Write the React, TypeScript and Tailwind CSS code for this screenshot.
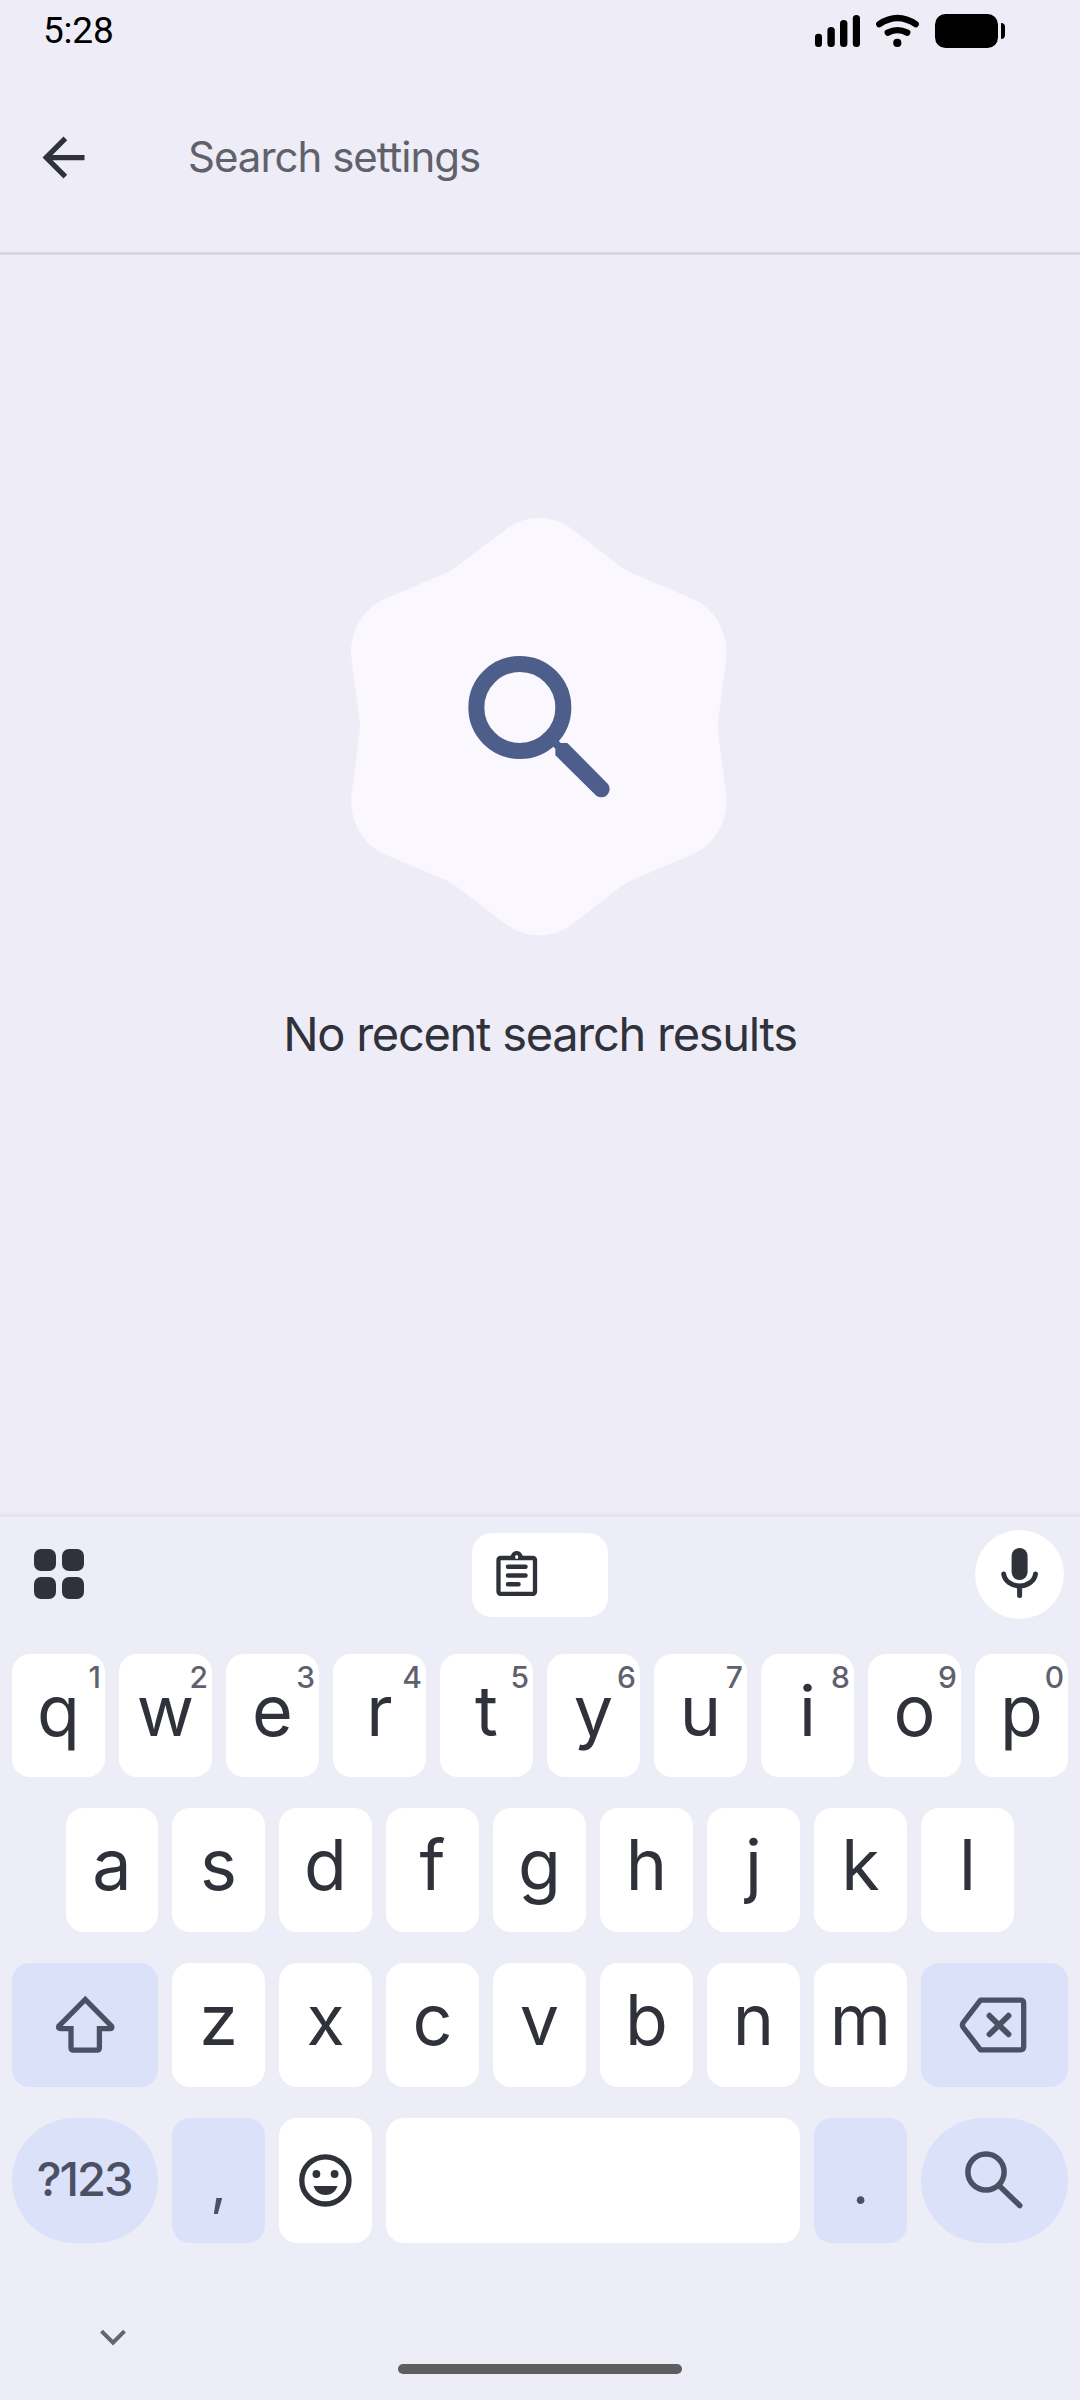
import type { ReactNode } from 'react';

const INK = '#2f323a';
const MUTED = '#4c5064';

function StatusBar() {
  return (
    <div className="flex h-[64px] justify-between pl-[43px] pr-[75px]">
      <span className="font-[Roboto] text-[37px] leading-[61px] tracking-[-0.2px] text-black">5:28</span>
      <svg className="h-[64px] w-[190px]" viewBox="815 0 190 64">
        <rect x="815" y="33.7" width="7" height="13.3" rx="3.3" />
        <rect x="827.4" y="27" width="7.4" height="20" rx="3.5" />
        <rect x="840" y="20" width="7.4" height="27" rx="3.5" />
        <rect x="852.8" y="15" width="7.2" height="32" rx="3.5" />
        <g fill="none" stroke="#000" strokeWidth="6.4" strokeLinecap="round">
          <path d="M879.3 24.2Q897.5 12 915.7 24.2" />
          <path d="M887.8 32.6Q897.5 27.6 907.2 32.6" />
        </g>
        <circle cx="897.3" cy="42.9" r="4.1" />
        <rect x="935" y="14" width="63" height="34" rx="10.5" />
        <path d="M1001 23c2.6 0 4 1.600 4 4v8c0 2.400-1.400 4-4 4z" />
      </svg>
    </div>
  );
}

function SearchHeader() {
  return (
    <header className="flex h-[191px] items-start border-b-[3px] border-[#d7d6e1] pl-[32px] pt-[62px]">
      <svg className="h-[63px] w-[63px]" viewBox="0 0 24 24" fill={INK}>
        <path d="M20 11H7.83l5.590-5.590L12 4l-8 8 8 8 1.410-1.410L7.830 13H20v-2z" />
      </svg>
      <span className="ml-[93px] text-[42px] leading-[61px] tracking-[-1px] text-[#5f626b]">
        Search settings
      </span>
    </header>
  );
}

function EmptyState() {
  return (
    <main className="flex h-[1262px] flex-col items-center pt-[245px]">
      <svg className="h-[450px] w-[420px]" viewBox="0 0 1260 1350">
        <path
          fill="#faf8fe"
          d="M530 86Q573 54 626 54Q682 54 725 86L872 200Q888 212 905 219L1090 298C1153 326 1195 396 1189 470L1164 665Q1162 680 1164 695L1189 890C1195 964 1153 1034 1090 1062L905 1141Q888 1148 872 1160L725 1274Q682 1306 626 1306Q573 1306 530 1274L382 1162Q366 1149 348 1141L162 1062C100 1034 58 964 64 890L89 695Q91 680 89 665L64 470C58 396 100 326 162 298L348 219Q366 211 382 198Z"
        />
        <circle cx="569.500" cy="622.500" r="130.500" fill="none" stroke="#4d5e8b" strokeWidth="48" />
        <path
          fill="#4d5e8b"
          d="M640 700L670 740L676 746V766L799 887A25 25 0 0 0 834 852L712 729H692L686 722L660 690Z"
        />
      </svg>
      <p className="mt-[54px] text-[47px] leading-[60px] tracking-[-1.28px] text-[#2f323a]">
        No recent search results
      </p>
    </main>
  );
}

function Toolbar() {
  return (
    <div className="flex h-[137px] items-start justify-between pl-[34px] pr-[16px] pt-[13px]">
      <div className="mt-[19px] grid grid-cols-2 gap-[6px]">
        <i className="h-[22px] w-[22px] rounded-[7px] bg-[#2f323a]" />
        <i className="h-[22px] w-[22px] rounded-[7px] bg-[#2f323a]" />
        <i className="h-[22px] w-[22px] rounded-[7px] bg-[#2f323a]" />
        <i className="h-[22px] w-[22px] rounded-[7px] bg-[#2f323a]" />
      </div>
      <div className="ml-[21px] mt-[3px] h-[84px] w-[136px] rounded-[20px] bg-white">
        <svg className="h-full w-full" viewBox="472 1533 136 84">
          <rect x="498.500" y="1558" width="36.500" height="35.800" rx="2" fill="none" stroke={INK} strokeWidth="4.300" />
          <path fill={INK} d="M509 1558.500C511 1557 511 1551 516.700 1551S522.500 1557 524.500 1558.500Z" />
          <ellipse cx="516.700" cy="1557" rx="1.600" ry="2" fill="#fff" />
          <path d="M508 1566.700H525.500M508 1575.500H525.500M508 1584.300H518.500" stroke={INK} strokeWidth="4.500" strokeLinecap="round" />
        </svg>
      </div>
      <div className="h-[89px] w-[89px] rounded-full bg-white">
        <svg className="h-full w-full" viewBox="975 1530 89 89">
          <rect x="1011.600" y="1548" width="16" height="32" rx="8" fill={INK} />
          <path d="M1003.700 1574a16 13.500 0 0 0 31.800 0M1019.600 1588V1595.500" fill="none" stroke={INK} strokeWidth="5" strokeLinecap="round" />
        </svg>
      </div>
    </div>
  );
}

function LetterKey({ letter, hint }: { letter: string; hint?: string }) {
  return (
    <div className="relative w-[93px] shrink-0 rounded-[18px] bg-white text-center text-[70px] leading-[113px] text-[#2f323a] first:data-[letter=a]:w-[92px]" data-letter={letter}>
      {letter}
      {hint && (
        <span className="absolute right-[4px] top-[7px] text-[30px] font-medium leading-[32px] text-[#5f616c]">
          {hint}
        </span>
      )}
    </div>
  );
}

function Letters({ keys }: { keys: string }) {
  return (
    <>
      {keys.split('').map((k) => (
        <LetterKey key={k} letter={k} />
      ))}
    </>
  );
}

function WideKey({ round, children }: { round?: boolean; children: ReactNode }) {
  return (
    <div
      className={`w-[147px] shrink-0 bg-[#dce1fa] first:w-[146px] ${round ? 'rounded-full' : 'rounded-[18px]'}`}
    >
      {children}
    </div>
  );
}

function Keyboard() {
  return (
    <section className="relative h-[883px] bg-[#ecedf6]">
      <div className="absolute inset-x-0 -top-[6px] h-[6px] bg-linear-to-b from-[#eeecf6] to-[#e3e1ec]" />
      <Toolbar />
      <div className="flex h-[123px] gap-[14px] px-[12px]">
        {'qwertyuiop'.split('').map((k, i) => (
          <LetterKey key={k} letter={k} hint={String((i + 1) % 10)} />
        ))}
      </div>
      <div className="mt-[31px] flex h-[124px] gap-[14px] pl-[66px]">
        <Letters keys="asdfghjkl" />
      </div>
      <div className="mt-[31px] flex h-[124px] gap-[14px] px-[12px]">
        <WideKey>
          <svg className="h-full w-full" viewBox="12 1963 146 124">
            <path
              d="M85.200 1999.500L58.800 2026.200Q58 2028.700 60.500 2028.700H71V2047.500Q71 2050.200 73.700 2050.200H97Q99.400 2050.200 99.400 2047.500V2028.700H110Q112.500 2028.700 111.600 2026.200Z"
              fill="none" stroke={MUTED} strokeWidth="5.300"
            />
          </svg>
        </WideKey>
        <Letters keys="zxcvbnm" />
        <WideKey>
          <svg className="h-full w-full" viewBox="921 1963 147 124">
            <g fill="none" stroke={MUTED} strokeWidth="5.300">
              <path d="M980.500 2000.200H1020.500Q1023.700 2000.200 1023.700 2003.400V2046.600Q1023.700 2049.800 1020.500 2049.800H980.500L963.300 2027.500Q961.500 2025 963.300 2022.500Z" strokeLinejoin="round" />
              <path d="M989.500 2015.700L1008.500 2034.300M1008.500 2015.700L989.500 2034.300" strokeWidth="5.800" strokeLinecap="round" />
            </g>
          </svg>
        </WideKey>
      </div>
      <div className="mt-[31px] flex h-[125px] gap-[14px] px-[12px]">
        <WideKey round>
          <div className="-ml-[2px] text-center text-[47px] font-medium leading-[122px] tracking-[-2px] text-[#4c5064]">?123</div>
        </WideKey>
        <div className="w-[93px] rounded-[18px] bg-[#dce1fa] text-center text-[58px] leading-[130px] text-[#4c5064]">,</div>
        <div className="w-[93px] rounded-[18px] bg-white">
          <svg className="h-full w-full" viewBox="279 2118 93 125">
            <circle cx="325.400" cy="2180.400" r="23.600" fill="none" stroke={INK} strokeWidth="5.300" />
            <circle cx="316.400" cy="2174" r="3.900" fill={INK} />
            <circle cx="334.600" cy="2174" r="3.900" fill={INK} />
            <path d="M313.500 2186H337.500C335.500 2192 331 2195 325.500 2195S315.500 2192 313.500 2186Z" fill={INK} />
          </svg>
        </div>
        <div className="w-[414px] rounded-[18px] bg-white" />
        <div className="w-[93px] rounded-[18px] bg-[#dce1fa] text-center text-[58px] leading-[130px] text-[#4c5064]">.</div>
        <WideKey round>
          <svg className="h-full w-full" viewBox="921 2118 147 125">
            <g fill="none" stroke={MUTED} strokeWidth="5.500">
              <circle cx="986" cy="2172" r="18.100" />
              <path d="M999 2185.500L1019.700 2205.500" strokeLinecap="round" />
            </g>
          </svg>
        </WideKey>
      </div>
      <div className="flex pl-[100px] pt-[86px]">
        <svg className="h-[17px] w-[26px]" viewBox="100 2329 26 17">
          <path d="M101.500 2331.200L113 2342.700L124.500 2331.200" fill="none" stroke="#666668" strokeWidth="4" />
        </svg>
      </div>
      <div className="mx-auto mt-[18px] h-[10px] w-[284px] rounded-[5px] bg-[#5e5e60]" />
    </section>
  );
}

export default function App() {
  return (
    <div className="h-[2400px] w-[1080px] overflow-hidden bg-[#eeecf6] font-[Inter,sans-serif]">
      <StatusBar />
      <SearchHeader />
      <EmptyState />
      <Keyboard />
    </div>
  );
}
